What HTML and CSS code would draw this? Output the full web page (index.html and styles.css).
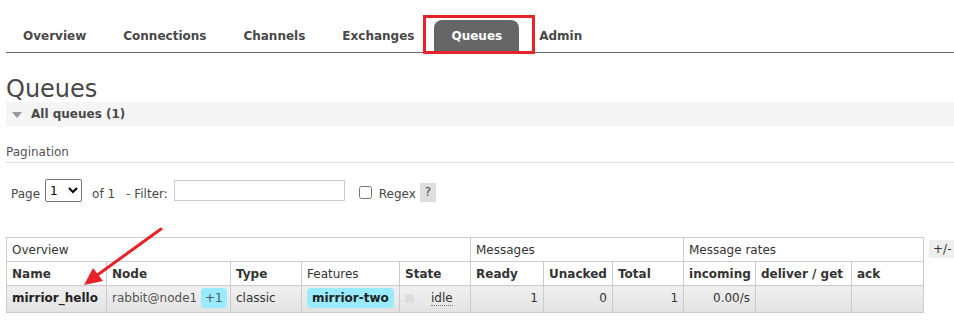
FILE: index.html
```html
<!DOCTYPE html>
<html lang="en">
<head>
    <meta charset="UTF-8">
    <title>RabbitMQ Management - Queues</title>
    <link rel="stylesheet" href="styles.css">
</head>
<body>
    <ul class="menu">
        <li><a href="#">Overview</a></li>
        <li><a href="#">Connections</a></li>
        <li><a href="#">Channels</a></li>
        <li><a href="#">Exchanges</a></li>
        <li class="selected"><a href="#">Queues</a></li>
        <li><a href="#">Admin</a></li>
    </ul>
    <div class="mark-box"></div>

    <h1>Queues</h1>
    <div class="section-head"><span class="toggle"></span>All queues (1)</div>

    <h3 class="pagination-title">Pagination</h3>
    <div class="filter">
        <label>Page</label>
        <select class="page-select"><option>1</option></select>
        <span class="of">of 1</span>
        <label>- Filter:</label>
        <input type="text" class="filter-input">
        <input type="checkbox" class="regex-box">
        <label>Regex</label>
        <span class="help">?</span>
    </div>

    <div class="table-wrap">
        <table class="list">
            <colgroup>
                <col class="c-name"><col class="c-node"><col class="c-type"><col class="c-feat"><col class="c-state">
                <col class="c-ready"><col class="c-unacked"><col class="c-total">
                <col class="c-in"><col class="c-deliver"><col class="c-ack">
            </colgroup>
            <thead>
                <tr class="group">
                    <th colspan="5">Overview</th>
                    <th colspan="3">Messages</th>
                    <th colspan="3">Message rates</th>
                </tr>
                <tr>
                    <th>Name</th>
                    <th>Node</th>
                    <th>Type</th>
                    <th class="plain">Features</th>
                    <th>State</th>
                    <th>Ready</th>
                    <th>Unacked</th>
                    <th>Total</th>
                    <th>incoming</th>
                    <th>deliver / get</th>
                    <th>ack</th>
                </tr>
            </thead>
            <tbody>
                <tr>
                    <td class="name">mirrior_hello</td>
                    <td class="node">rabbit@node1 <span class="badge">+1</span></td>
                    <td>classic</td>
                    <td><span class="policy">mirrior-two</span></td>
                    <td><span class="state-dot"></span><span class="idle">idle</span></td>
                    <td class="num">1</td>
                    <td class="num">0</td>
                    <td class="num">1</td>
                    <td class="num">0.00/s</td>
                    <td></td>
                    <td></td>
                </tr>
            </tbody>
        </table>
        <span class="columns">+/-</span>
    </div>

    <svg class="arrow" width="954" height="329" viewBox="0 0 954 329">
        <line x1="161" y1="229" x2="96" y2="276" stroke="#e8222b" stroke-width="3" stroke-linecap="round"/>
        <polygon points="84,285 93,268 103,281" fill="#e8222b"/>
    </svg>
</body>
</html>
```

FILE: styles.css
```css
body {
    font-family: 'DejaVu Sans', Verdana, sans-serif;
    font-size: 12px;
    color: #484848;
    margin: 0;
    padding: 0;
    position: relative;
}
.menu {
    list-style: none;
    display: flex;
    margin: 20px 0 0 6px;
    padding: 0;
    border-bottom: 1px solid #666;
}
.menu li a {
    display: block;
    padding: 1px 17px 0;
    height: 31px;
    line-height: 31px;
    font-size: 12px;
    font-weight: bold;
    color: #484848;
    text-decoration: none;
    border-radius: 8px 8px 0 0;
}
.menu li {
    margin-right: 3px;
}
.menu li.selected a {
    background-color: #666;
    color: #fff;
}
.mark-box {
    position: absolute;
    left: 423px;
    top: 15px;
    width: 106px;
    height: 33px;
    border: 3px solid #e8222b;
}
h1 {
    margin: 23px 0 0 6px;
    font-size: 24px;
    font-weight: normal;
    line-height: 26px;
    color: #484848;
}
.section-head {
    margin: 0 0 0 6px;
    height: 25px;
    line-height: 25px;
    background-color: #f5f5f5;
    font-weight: bold;
    padding-left: 25px;
    position: relative;
}
.toggle {
    position: absolute;
    left: 6px;
    top: 10px;
    border-left: 5px solid transparent;
    border-right: 5px solid transparent;
    border-top: 6px solid #999;
}
.pagination-title {
    margin: 18px 0 0 6px;
    padding-bottom: 3px;
    font-size: 12px;
    font-weight: normal;
    color: #555;
    border-bottom: 1px solid #ddd;
}
.filter {
    display: flex;
    align-items: center;
    margin: 16px 0 0 11px;
    font-size: 12px;
}
.filter label,
.filter .of {
    padding-top: 6px;
}
.page-select {
    margin: 0 0 0 5px;
    width: 37px;
    height: 23px;
    font-family: inherit;
    font-size: 12px;
    border: 1px solid #767676;
    border-radius: 2px;
    background: #fff;
}
.of {
    margin: 0 11px 0 10px;
}
.filter-input {
    margin: 0 0 0 6px;
    width: 165px;
    height: 17px;
    border: 1px solid #ccc;
}
.regex-box {
    margin: 3px 7px 0 14px;
    width: 13px;
    height: 13px;
}
.help {
    margin: 4px 0 0 4px;
    padding: 0 5px;
    background-color: #ddd;
    line-height: 19px;
}
.table-wrap {
    display: flex;
    align-items: flex-start;
    margin: 35px 0 0 6px;
}
table.list {
    border-collapse: collapse;
    table-layout: fixed;
    width: 917px;
}
.c-name { width: 100px; }
.c-node { width: 124px; }
.c-type { width: 71px; }
.c-feat { width: 98px; }
.c-state { width: 71px; }
.c-ready { width: 73px; }
.c-unacked { width: 69px; }
.c-total { width: 71px; }
.c-in { width: 72px; }
.c-deliver { width: 96px; }
.c-ack { width: 72px; }
table.list th,
table.list td {
    border: 1px solid #ccc;
    padding: 0 5px;
    height: 23px;
    text-align: left;
    white-space: nowrap;
    color: #333;
}
table.list th {
    font-weight: bold;
}
table.list tr.group th,
table.list th.plain {
    font-weight: normal;
}
table.list td {
    height: 24px;
    padding-bottom: 2px;
    background: linear-gradient(#f0f0f0, #e2e2e2);
}
table.list td.name {
    font-weight: bold;
    color: #222;
}
table.list td.node {
    color: #555;
}
table.list td.num {
    text-align: right;
}
.badge {
    background-color: #99ebff;
    border-radius: 4px;
    padding: 3px 4px;
}
.policy {
    background-color: #99ebff;
    border-radius: 4px;
    padding: 3px 5px;
    font-weight: bold;
    color: #222;
}
.state-dot {
    display: inline-block;
    width: 9px;
    height: 9px;
    background-color: #ddd;
    vertical-align: middle;
    margin-right: 17px;
}
.idle {
    border-bottom: 1px dotted #777;
}
.columns {
    margin: 3px 0 0 5px;
    padding: 1px 4px;
    background-color: #eee;
    color: #333;
    font-size: 12px;
    line-height: 16px;
}
.arrow {
    position: absolute;
    left: 0;
    top: 0;
    pointer-events: none;
}
```
